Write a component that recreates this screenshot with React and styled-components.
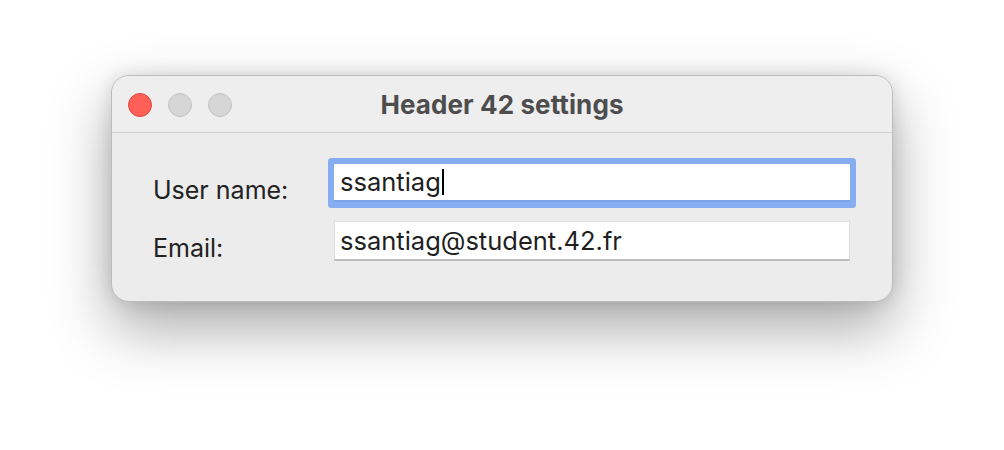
import React from "react";
import styled, { createGlobalStyle } from "styled-components";

const Global = createGlobalStyle`
  html, body { margin: 0; padding: 0; background: #ffffff; }
  body { font-family: Inter, "Noto Sans", "Liberation Sans", sans-serif; }
  * { box-sizing: border-box; }
`;

const Page = styled.div`
  width: 1004px;
  height: 450px;
  padding: 75px 0 0 111px;
  overflow: hidden;
`;

const Window = styled.div`
  width: 782px;
  height: 227px;
  border-radius: 18px;
  background: #ececec;
  border: 1px solid #bcbcbc;
  box-shadow: 0 26px 60px rgba(0, 0, 0, 0.34), 0 0 18px rgba(0, 0, 0, 0.12);
  overflow: hidden;
  display: flex;
  flex-direction: column;
`;

const TitleBar = styled.div`
  height: 57px;
  flex: none;
  display: grid;
  grid-template-columns: 1fr auto 1fr;
  align-items: center;
  padding: 0 16px;
  background: #eeeeee;
  border-bottom: 1px solid #d2d2d2;
`;

const Lights = styled.div`
  display: flex;
  gap: 16px;
  align-items: center;
  margin-top: 1px;
`;

const Light = styled.span`
  width: 24px;
  height: 24px;
  border-radius: 50%;
  background: ${(p) => (p.$red ? "#ff5f57" : "#d6d6d6")};
  border: 1px solid ${(p) => (p.$red ? "#e2463f" : "#c2c2c2")};
`;

const Title = styled.div`
  font-size: 26px;
  font-weight: 700;
  color: #4d4d4d;
  letter-spacing: 0.1px;
`;

const Form = styled.div`
  display: grid;
  grid-template-columns: 181px 516px;
  grid-template-rows: 38px 40px;
  row-gap: 19px;
  padding: 31px 0 0 41px;
`;

const Label = styled.label`
  font-size: 25px;
  line-height: 30px;
  height: 30px;
  color: #222222;
  align-self: start;
  margin-top: ${(p) => (p.$first ? "11px" : "12px")};
`;

const Field = styled.div`
  height: ${(p) => (p.$focused ? "38px" : "40px")};
  background: #ffffff;
  display: flex;
  align-items: center;
  padding-left: 6px;
  font-size: 25.5px;
  line-height: 30px;
  color: #1f1f1f;
  ${(p) =>
    p.$focused
      ? `
    border-radius: 1px;
    border-bottom: 2px solid #7aa2e6;
    box-shadow: 0 0 0 6px #85adef;
  `
      : `
    border: 1px solid #dedede;
    border-bottom: 2px solid #bdbdbd;
    padding-left: 5px;
  `}
`;

const Caret = styled.span`
  display: inline-block;
  width: 2px;
  height: 26px;
  background: #000000;
  margin-left: 1px;
`;

export default function App() {
  return (
    <>
      <Global />
      <Page>
        <Window>
          <TitleBar>
            <Lights>
              <Light $red />
              <Light />
              <Light />
            </Lights>
            <Title>Header 42 settings</Title>
            <div />
          </TitleBar>
          <Form>
            <Label $first>User name:</Label>
            <Field $focused>
              ssantiag
              <Caret />
            </Field>
            <Label>Email:</Label>
            <Field>ssantiag@student.42.fr</Field>
          </Form>
        </Window>
      </Page>
    </>
  );
}
